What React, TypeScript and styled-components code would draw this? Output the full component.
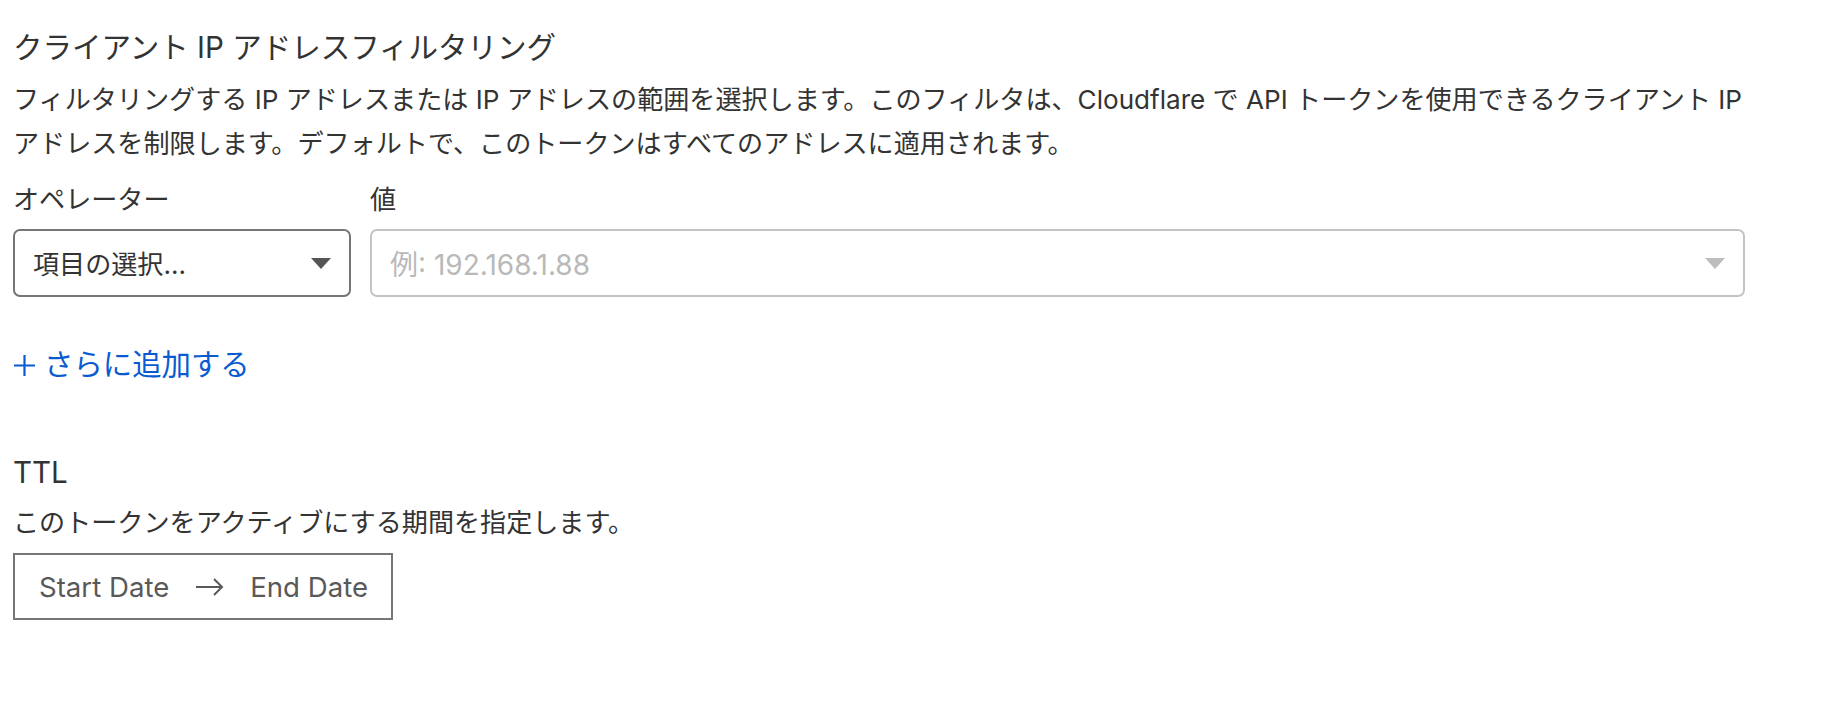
import React from "react";
import styled, { createGlobalStyle } from "styled-components";

const GlobalStyle = createGlobalStyle`
  html, body { margin: 0; padding: 0; background: #ffffff; }
  body {
    font-family: Inter, "Noto Sans CJK JP", sans-serif;
    color: #333333;
  }
`;

const Page = styled.div`
  width: 1840px;
  height: 724px;
  box-sizing: border-box;
  padding: 27px 0 0 13px;
  display: flex;
  flex-direction: column;
  align-items: flex-start;
`;

const SectionTitle = styled.h2<{ $top?: number }>`
  margin: ${(p) => p.$top ?? 0}px 0 0;
  font-size: 29.5px;
  line-height: 40px;
  font-weight: 400;
  color: #333333;
`;

const Description = styled.p<{ $width?: number; $top?: number }>`
  margin: ${(p) => p.$top ?? 11}px 0 0;
  width: ${(p) => (p.$width ? `${p.$width}px` : "auto")};
  font-size: 26.1px;
  line-height: 44px;
  color: #333333;
`;

const FieldRow = styled.div`
  margin-top: 12px;
  display: grid;
  grid-template-columns: 338px 1375px;
  column-gap: 19px;
`;

const Field = styled.div`
  display: flex;
  flex-direction: column;
`;

const Label = styled.label`
  font-size: 26.1px;
  line-height: 44px;
  color: #333333;
  margin-bottom: 7px;
`;

const SelectBox = styled.div<{ $muted?: boolean }>`
  box-sizing: border-box;
  height: 68px;
  display: flex;
  align-items: center;
  justify-content: space-between;
  padding: 0 18px 0 18px;
  border: 2px solid ${(p) => (p.$muted ? "#c4c4c4" : "#767676")};
  border-radius: 7px;
  background: #fff;
  font-size: ${(p) => (p.$muted ? "28px" : "26.1px")};
  color: ${(p) => (p.$muted ? "#b9b9b9" : "#333333")};
`;

const Caret = styled.svg`
  flex: none;
`;

const AddLink = styled.a`
  margin-top: 46px;
  display: flex;
  align-items: center;
  gap: 9px;
  font-size: 29.4px;
  line-height: 44px;
  color: #0a5bd0;
  text-decoration: none;
  cursor: pointer;
`;

const PlusIcon = styled.svg`
  flex: none;
  margin-left: 1px;
`;

const DateRange = styled.div`
  margin-top: 8px;
  box-sizing: border-box;
  width: 380px;
  height: 67px;
  display: flex;
  align-items: center;
  gap: 26px;
  padding: 0 0 0 24px;
  border: 2px solid #767676;
  font-size: 27.6px;
  color: #595959;
`;

const DateText = styled.span`
  white-space: nowrap;
`;

const ArrowIcon = styled.svg`
  flex: none;
`;

const TriangleDown: React.FC<{ color: string }> = ({ color }) => (
  <Caret width="20" height="11" viewBox="0 0 20 11">
    <path d="M0 0 H20 L10 11 Z" fill={color} />
  </Caret>
);

export default function App() {
  return (
    <>
      <GlobalStyle />
      <Page>
        <SectionTitle>クライアント IP アドレスフィルタリング</SectionTitle>
        <Description $width={1760}>
          フィルタリングする IP アドレスまたは IP アドレスの範囲を選択します。このフィルタは、Cloudflare で API トークンを使用できるクライアント IP
          <br />
          アドレスを制限します。デフォルトで、このトークンはすべてのアドレスに適用されます。
        </Description>
        <FieldRow>
          <Field>
            <Label>オペレーター</Label>
            <SelectBox>
              <span>項目の選択...</span>
              <TriangleDown color="#555555" />
            </SelectBox>
          </Field>
          <Field>
            <Label>値</Label>
            <SelectBox $muted>
              <span>例: 192.168.1.88</span>
              <TriangleDown color="#bdbdbd" />
            </SelectBox>
          </Field>
        </FieldRow>
        <AddLink>
          <PlusIcon width="21" height="21" viewBox="0 0 21 21">
            <path d="M10.5 0 V21 M0 10.5 H21" stroke="#0a5bd0" strokeWidth="2.2" fill="none" />
          </PlusIcon>
          <span>さらに追加する</span>
        </AddLink>
        <SectionTitle $top={65}>TTL</SectionTitle>
        <Description $top={9}>このトークンをアクティブにする期間を指定します。</Description>
        <DateRange>
          <DateText>Start Date</DateText>
          <ArrowIcon width="29" height="20" viewBox="0 0 29 20">
            <path d="M1 10 H27 M19 2 L27 10 L19 18" stroke="#595959" strokeWidth="2" fill="none" />
          </ArrowIcon>
          <DateText>End Date</DateText>
        </DateRange>
      </Page>
    </>
  );
}
